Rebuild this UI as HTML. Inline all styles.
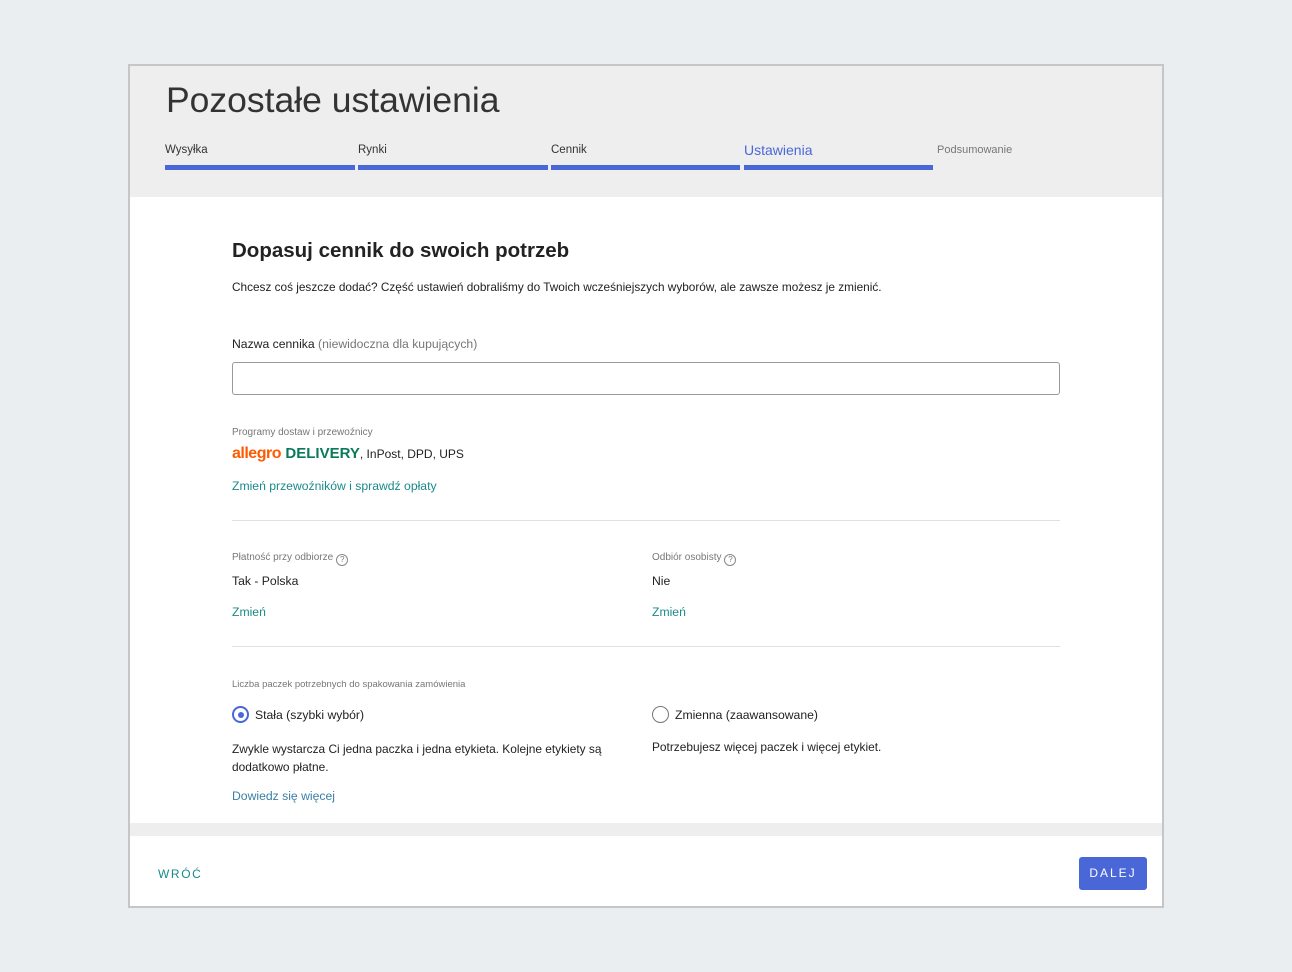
<!DOCTYPE html>
<html><head><meta charset="utf-8"><style>
*{margin:0;padding:0;box-sizing:border-box}
body{width:1292px;height:972px;background:#ebeef1;font-family:"Liberation Sans",sans-serif;position:relative;overflow:hidden;color:#222}
.frame{position:absolute;left:128px;top:64px;width:1036px;height:844px;border:2px solid #c6c6c6;background:#fff}
.hdr{position:absolute;left:0;top:0;width:1032px;height:131px;background:#eeeeee}
.a{position:absolute;white-space:nowrap}
h1{position:absolute;left:36px;top:14px;font-size:35.5px;font-weight:normal;color:#333;letter-spacing:0}
.lab{font-size:11.5px;color:#333;top:78px}
.bar{position:absolute;top:99px;height:5px;background:#4a67d8}
.lbl{font-size:10px;color:#777}
.t13{font-size:12.2px;color:#222}
.link{font-size:12.2px;color:#1a8a8a}
.hr{position:absolute;left:102px;width:828px;height:1px;background:#e0e0e0}
.q{display:inline-block;width:12px;height:12px;border:1px solid #888;border-radius:50%;font-size:8px;text-align:center;line-height:10px;color:#777;vertical-align:-2px;margin-left:3px}
</style></head><body>
<div class="frame">
<div class="hdr">
<h1>Pozostałe ustawienia</h1>
<div class="a lab" style="left:35px">Wysyłka</div>
<div class="a lab" style="left:228px">Rynki</div>
<div class="a lab" style="left:421px">Cennik</div>
<div class="a" style="left:614px;top:76px;font-size:14px;color:#4a67d8">Ustawienia</div>
<div class="a lab" style="left:807px;color:#777;font-size:11px">Podsumowanie</div>
<div class="bar" style="left:35px;width:190px"></div>
<div class="bar" style="left:228px;width:190px"></div>
<div class="bar" style="left:421px;width:189px"></div>
<div class="bar" style="left:614px;width:189px"></div>
</div>
<div class="a" style="left:102px;top:173px;font-size:20.5px;font-weight:bold;color:#222">Dopasuj cennik do swoich potrzeb</div>
<div class="a t13" style="left:102px;top:214px;font-size:11.8px">Chcesz coś jeszcze dodać? Część ustawień dobraliśmy do Twoich wcześniejszych wyborów, ale zawsze możesz je zmienić.</div>
<div class="a t13" style="left:102px;top:271px">Nazwa cennika <span style="color:#777">(niewidoczna dla kupujących)</span></div>
<div class="a" style="left:102px;top:296px;width:828px;height:33px;border:1px solid #999;border-radius:3px"></div>
<div class="a lbl" style="left:102px;top:361px">Programy dostaw i przewoźnicy</div>
<div class="a" style="left:102px;top:379px;font-size:16px"><span style="color:#ff5a00;font-weight:bold;letter-spacing:-0.5px">allegro</span> <span style="color:#0b7a5a;font-weight:bold;font-size:15px">DELIVERY</span><span style="font-size:12px;color:#222">, InPost, DPD, UPS</span></div>
<div class="a link" style="left:102px;top:413px">Zmień przewoźników i sprawdź opłaty</div>
<div class="hr" style="top:454px"></div>
<div class="a lbl" style="left:102px;top:486px">Płatność przy odbiorze<span class="q">?</span></div>
<div class="a t13" style="left:102px;top:508px">Tak - Polska</div>
<div class="a link" style="left:102px;top:539px">Zmień</div>
<div class="a lbl" style="left:522px;top:486px">Odbiór osobisty<span class="q">?</span></div>
<div class="a t13" style="left:522px;top:508px">Nie</div>
<div class="a link" style="left:522px;top:539px">Zmień</div>
<div class="hr" style="top:580px"></div>
<div class="a lbl" style="left:102px;top:613px;font-size:9.5px">Liczba paczek potrzebnych do spakowania zamówienia</div>
<div class="a" style="left:102px;top:640px;width:17px;height:17px;border:2px solid #4a67d8;border-radius:50%"><div style="position:absolute;left:3.5px;top:3.5px;width:6px;height:6px;border-radius:50%;background:#4a67d8"></div></div>
<div class="a t13" style="left:125px;top:642px">Stała (szybki wybór)</div>
<div class="a" style="left:522px;top:640px;width:17px;height:17px;border:1px solid #777;border-radius:50%"></div>
<div class="a t13" style="left:545px;top:642px">Zmienna (zaawansowane)</div>
<div class="a t13" style="left:102px;top:674px;line-height:18px;font-size:11.9px">Zwykle wystarcza Ci jedna paczka i jedna etykieta. Kolejne etykiety są<br>dodatkowo płatne.</div>
<div class="a t13" style="left:522px;top:674px;font-size:11.9px">Potrzebujesz więcej paczek i więcej etykiet.</div>
<div class="a" style="left:102px;top:723px;font-size:12.2px;color:#3a7fa5">Dowiedz się więcej</div>
<div class="a" style="left:0;top:757px;width:1032px;height:13px;background:#eeeeee"></div>
<div class="a" style="left:28px;top:801px;font-size:12px;letter-spacing:1.6px;color:#1a8a8a">WRÓĆ</div>
<div class="a" style="left:949px;top:791px;width:68px;height:33px;background:#4a67d8;border-radius:3px;color:#fff;font-size:12px;letter-spacing:2px;text-align:center;line-height:33px">DALEJ</div>
</div>
</body></html>
